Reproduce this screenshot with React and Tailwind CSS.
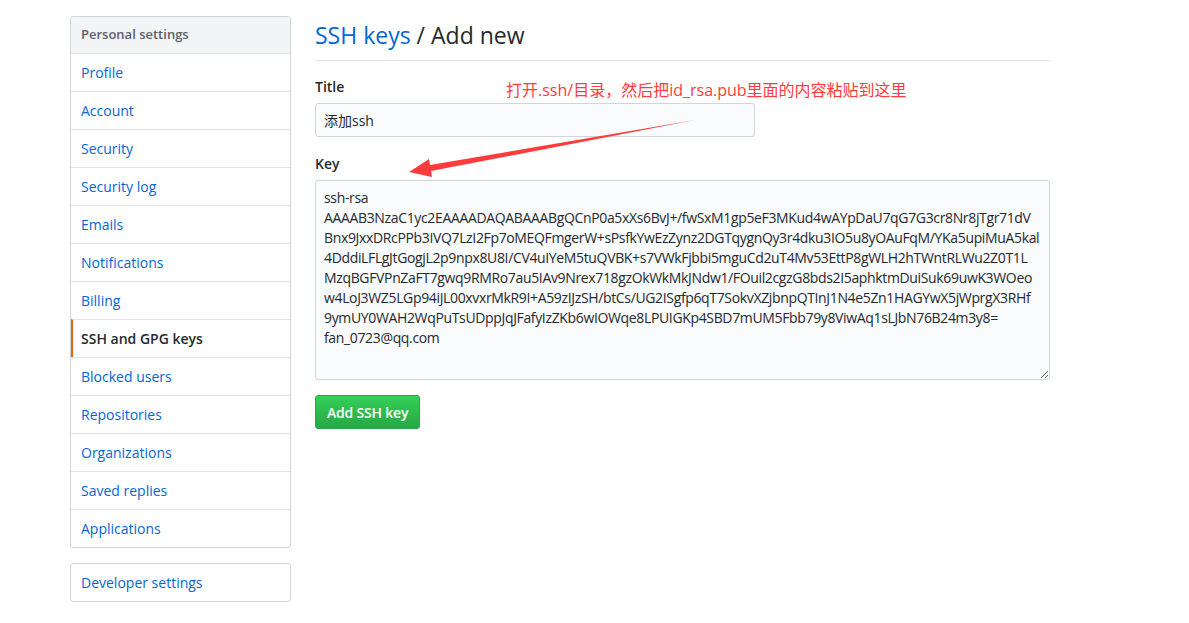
import React from 'react';

const menuItems = [
  'Profile',
  'Account',
  'Security',
  'Security log',
  'Emails',
  'Notifications',
  'Billing',
  'SSH and GPG keys',
  'Blocked users',
  'Repositories',
  'Organizations',
  'Saved replies',
  'Applications',
];

const keyText = [
  'ssh-rsa',
  'AAAAB3NzaC1yc2EAAAADAQABAAABgQCnP0a5xXs6BvJ+/fwSxM1gp5eF3MKud4wAYpDaU7qG7G3cr8Nr8jTgr71dV',
  'Bnx9JxxDRcPPb3IVQ7LzI2Fp7oMEQFmgerW+sPsfkYwEzZynz2DGTqygnQy3r4dku3IO5u8yOAuFqM/YKa5upiMuA5kal',
  '4DddiLFLgJtGogjL2p9npx8U8I/CV4uIYeM5tuQVBK+s7VWkFjbbi5mguCd2uT4Mv53EttP8gWLH2hTWntRLWu2Z0T1L',
  'MzqBGFVPnZaFT7gwq9RMRo7au5IAv9Nrex718gzOkWkMkJNdw1/FOuil2cgzG8bds2I5aphktmDuiSuk69uwK3WOeo',
  'w4LoJ3WZ5LGp94iJL00xvxrMkR9I+A59zIJzSH/btCs/UG2ISgfp6qT7SokvXZjbnpQTInJ1N4e5Zn1HAGYwX5jWprgX3RHf',
  '9ymUY0WAH2WqPuTsUDppJqJFafyIzZKb6wIOWqe8LPUIGKp4SBD7mUM5Fbb79y8ViwAq1sLJbN76B24m3y8=',
  'fan_0723@qq.com',
].join('\n');

const font = { fontFamily: '"Segoe UI", "Open Sans", "Noto Sans CJK SC", sans-serif' };

const Sidebar = () => (
  <div className="w-[221px] shrink-0">
    <div className="border border-[#d1d5da] rounded-[3px] overflow-hidden">
      <div className="h-[36px] flex items-center px-[10px] bg-[#f3f4f6] text-[13px] font-semibold text-[#586069]">
        Personal settings
      </div>
      {menuItems.map(item => {
        const active = item === 'SSH and GPG keys';
        return (
          <div
            key={item}
            className={
              active
                ? 'h-[38px] flex items-center pl-[8px] pr-[10px] border-t border-[#e1e4e8] border-l-2 border-l-[#e36209] text-[14px] font-semibold text-[#24292e]'
                : 'h-[38px] flex items-center px-[10px] border-t border-[#e1e4e8] text-[14px] text-[#0366d6]'
            }
          >
            {item}
          </div>
        );
      })}
    </div>
    <div className="mt-[15px] border border-[#d1d5da] rounded-[3px] h-[39px] flex items-center px-[10px] text-[14px] text-[#0366d6]">
      Developer settings
    </div>
  </div>
);

export default function App() {
  return (
    <div className="relative w-[1189px] h-[623px] bg-white overflow-hidden text-[#24292e]" style={font}>
      <div className="flex pl-[70px] pt-[16px] gap-[24px]">
        <Sidebar />
        <div className="w-[735px]">
          <div className="pt-[4px] pb-[10px] border-b border-[#e1e4e8] text-[23px] leading-[30px]">
            <span className="text-[#0366d6]">SSH keys</span> / Add new
          </div>
          <div className="mt-[16px] text-[14px] font-semibold leading-[20px]">Title</div>
          <input
            readOnly
            value="添加ssh"
            className="mt-[6px] w-[440px] h-[34px] px-[8px] text-[14px] bg-[#fafbfc] border border-[#d1d5da] rounded-[3px] outline-none text-[#24292e]"
            style={font}
          />
          <div className="mt-[17px] text-[14px] font-semibold leading-[20px]">Key</div>
          <textarea
            readOnly
            wrap="off"
            value={keyText}
            className="mt-[6px] block w-[735px] h-[200px] px-[8px] py-[7px] text-[14px] leading-[20px] tracking-[-0.35px] bg-[#fafbfc] border border-[#d1d5da] rounded-[3px] outline-none overflow-hidden whitespace-pre text-[#24292e]"
            style={font}
          />
          <button className="mt-[15px] h-[34px] px-[11px] text-[14px] font-semibold text-white rounded-[3px] border border-[#28a745] bg-gradient-to-b from-[#34d058] to-[#28a745] tracking-[-0.2px]">
            Add SSH key
          </button>
        </div>
      </div>

      <div className="absolute left-[506px] top-[79px] text-[16px] leading-[22px] text-[#ff3b3b] whitespace-nowrap" style={font}>
        打开.ssh/目录，然后把id_rsa.pub里面的内容粘贴到这里
      </div>
      <svg className="absolute left-0 top-0 pointer-events-none" width="1189" height="623">
        <polygon
          points="409,172 429,159 430,165 695,120 431,171 432,177"
          fill="#ff3b3b"
        />
      </svg>
    </div>
  );
}
